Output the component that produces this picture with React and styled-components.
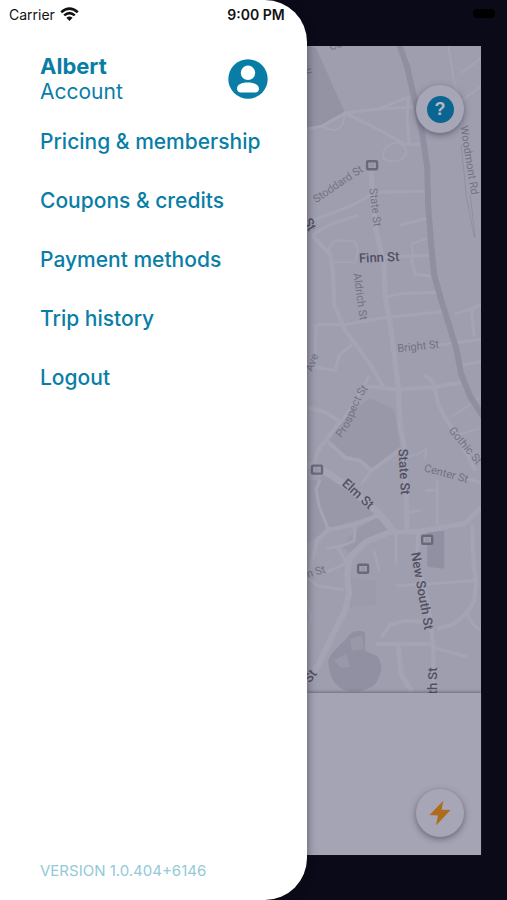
import styled, { createGlobalStyle } from "styled-components"

const GlobalStyle = createGlobalStyle`
          * {
                    box-sizing: border-box;
          }

          body {
                    margin: 0;
                    background: #0a0a18;
                    font-family: Inter, "Liberation Sans", sans-serif;
          }
`

const Container = styled.div`
          min-height: 100vh;
          display: flex;
`

const Drawer = styled.aside`
          position: relative;
          z-index: 1;
          flex: 0 0 60.5%;
          display: flex;
          flex-direction: column;
          background: white;
          border-radius: 0 42px 42px 0;
          box-shadow: 0 0 10px rgba(10, 10, 24, 0.5);
`

const StatusBar = styled.div`
          height: 28px;
          padding: 0 22px 0 9px;
          display: flex;
          align-items: center;
          justify-content: space-between;
          color: #111;
          font-size: 14px;
`

const Carrier = styled.span`
          display: flex;
          align-items: center;
          gap: 5px;
`

const Time = styled.span`
          font-weight: 600;
`

const Profile = styled.a`
          margin: 26px 39px 0 40px;
          display: flex;
          align-items: center;
          justify-content: space-between;
          color: #087ea6;
          font-size: 21px;
          line-height: 25px;
          text-decoration: none;
`

const ProfileText = styled.span`
          display: flex;
          flex-direction: column;
`

const Name = styled.strong`
          font-size: 22px;
          font-weight: 700;
`

const Menu = styled.nav`
          margin: 25px 20px 0 40px;
          display: flex;
          flex-direction: column;
          align-items: flex-start;
          gap: 33px;
`

const MenuLink = styled.a`
          color: #087ea6;
          font-size: 21px;
          font-weight: 500;
          line-height: 26px;
          text-decoration: none;
          white-space: nowrap;
`

const Version = styled.p`
          margin: auto 0 0;
          padding: 0 40px 20px;
          color: #93c9d8;
          font-size: 15px;
          line-height: 18px;
`

const Backdrop = styled.main`
          flex: 1;
          min-width: 0;
          padding: 0 26px 45px 0;
          display: flex;
          flex-direction: column;
`

const BackdropBar = styled.div`
          height: 46px;
          margin-right: -14px;
          padding-top: 9px;
          display: flex;
          justify-content: flex-end;
`

const Battery = styled.div`
          width: 22px;
          height: 9px;
          border-radius: 4px;
          background: black;
`

const MapArea = styled.section`
          position: relative;
          flex: 1;
          min-height: 320px;
          display: flex;
          contain: size;
          overflow: hidden;
          background: #9f9eaf;
`

const MapDrawing = styled.svg`
          flex: 1;
          min-width: 0;
          display: block;
`

const Road = styled.path`
          fill: none;
          stroke: #a5a4b4;
          stroke-width: ${props => props.$width || 3};
          stroke-linejoin: round;
`

const Label = styled.text`
          fill: ${props => props.$main ? "#515062" : "#737284"};
          font-family: Roboto, "Liberation Sans", sans-serif;
          font-size: ${props => props.$main ? "13px" : "11px"};
          font-weight: ${props => props.$main ? 500 : 400};
          text-anchor: middle;
          dominant-baseline: central;
`

const Sheet = styled.section`
          position: relative;
          height: 162px;
          padding: 0 17px 18px 0;
          display: flex;
          align-items: flex-end;
          justify-content: flex-end;
          background: #a5a4b5;
          box-shadow: 0 -1px 3px rgba(60, 58, 80, 0.5);
`

const RoundButton = styled.button`
          width: 48px;
          height: 48px;
          padding: 0;
          display: flex;
          align-items: center;
          justify-content: center;
          border: none;
          border-radius: 50%;
          background: #a7a6b7;
          box-shadow: 0 2px 6px rgba(50, 48, 70, 0.55);
          cursor: pointer;
`

const HelpButton = styled(RoundButton)`
          position: absolute;
          top: 39px;
          right: 17px;
`

const HelpMark = styled.span`
          width: 27px;
          height: 27px;
          border-radius: 50%;
          background: #0a6690;
          color: #b5b9ca;
          font-size: 18px;
          font-weight: 700;
          line-height: 27px;
`

const menuItems = [
          "Pricing & membership",
          "Coupons & credits",
          "Payment methods",
          "Trip history",
          "Logout",
]

const roads = [
          { d: "M307 129 L322 126 L345 113 L378 109 L414 107" },
          { d: "M345 113 L372 126 L405 144 L420 144" },
          { d: "M378 109 L396 102 L408 97 L407 120 L409 144" },
          { d: "M322 126 Q343 138 345 113", w: 2 },
          { d: "M383 158 Q382 144 398 142 Q412 150 402 159 Q391 164 383 158", w: 2 },
          { d: "M371 170 L375 225 L384 265 L385 295 L391 330 L398 385 L400 425 L404 445 L406 495 L407 530", w: 5 },
          { d: "M425 191 L376 192 L350 206 L310 221" },
          { d: "M312 235 L330 224 L358 215" },
          { d: "M312 235 L330 254 L333 272 L334 304 L345 330 L369 362 L384 388", w: 4 },
          { d: "M331 262 L329 249 Q331 239 342 240 L354 241 Q360 247 355 262 L331 262", w: 2 },
          { d: "M428 218 L399 225" },
          { d: "M427 238 L411 244 L413 255", w: 2 },
          { d: "M383 257 L429 255 M411 258 L415 274 L432 276" },
          { d: "M384 297 L403 293 L436 292" },
          { d: "M317 324 L345 324 L386 317 L443 311" },
          { d: "M454 314 L470 309 L481 304 M471 309 L474 336", w: 3 },
          { d: "M437 345 L456 342 L481 339 M460 365 L481 361" },
          { d: "M307 365 L335 370 L339 355 L352 344" },
          { d: "M316 324 L315 363" },
          { d: "M367 386 L399 389 L431 387 L461 382", w: 4 },
          { d: "M424 374 L433 381 L438 403 L446 419 L460 440 L475 470", w: 4 },
          { d: "M451 416 L470 404 L481 396", w: 2 },
          { d: "M307 407 L326 412 L340 421 L318 450 L314 462", w: 4 },
          { d: "M369 376 L353 404 L340 423" },
          { d: "M328 441 L345 457 L360 460 L371 470 L391 456 L402 448", w: 4 },
          { d: "M371 470 L361 484" },
          { d: "M307 463 L325 471 L342 482 L366 501 L379 513 L393 530", w: 7 },
          { d: "M320 479 L316 489 L319 505 L328 528" },
          { d: "M380 514 L354 524 L328 529 L317 540 L313 557 L309 573", w: 4 },
          { d: "M393 530 L366 541 L350 556 L347 573 L349 592 L345 610 L332 635 L319 663 L307 680", w: 6 },
          { d: "M355 526 L354 540 L342 545 L325 548 M337 545 L347 563", w: 3 },
          { d: "M307 577 L318 585 L344 589 M327 571 L350 561" },
          { d: "M307 640 L310 616 L307 600" },
          { d: "M392 531 L416 531 L464 523 L481 507", w: 5 },
          { d: "M396 531 L396 564 M374 550 L379 570" },
          { d: "M437 480 L437 524 M405 512 L420 510" },
          { d: "M466 478 L481 482 M425 490 L438 489" },
          { d: "M472 524 L473 560 L476 582 L474 600 L466 613 L452 624 L437 628", w: 4 },
          { d: "M396 585 L430 583 L475 580" },
          { d: "M418 532 L417 560 L428 603 L433 643 L433 693", w: 4 },
          { d: "M433 621 L404 620 L390 624 L381 636 M376 643 L433 643", w: 4 },
          { d: "M398 643 L401 673 L412 691", w: 5 },
          { d: "M435 647 L467 656 M466 613 L476 627 L481 629" },
          { d: "M448 46 L454 82 L461 106 M461 73 L481 58 M462 100 L481 86", w: 2 },
          { d: "M393 460 L419 453 L426 448 L425 459 M479 428 L455 435", w: 2 },
]

const labels = [
          { text: "Co", x: 336, y: 45, r: -18 },
          { text: "n", x: 308, y: 71, r: -100 },
          { text: "Stoddard St", x: 338, y: 184, r: -34 },
          { text: "State St", x: 375, y: 207, r: 84 },
          { text: "St", x: 310, y: 224, r: 62, main: true },
          { text: "Finn St", x: 379, y: 257, r: -3, main: true },
          { text: "Aldrich St", x: 360, y: 296, r: 82 },
          { text: "Bright St", x: 418, y: 346, r: -6 },
          { text: "Ave", x: 312, y: 362, r: -68 },
          { text: "Gothic St", x: 465, y: 445, r: 50 },
          { text: "State St", x: 404, y: 471, r: 87, main: true },
          { text: "Center St", x: 446, y: 473, r: 15 },
          { text: "Elm St", x: 358, y: 493, r: 42, main: true },
          { text: "n St", x: 316, y: 571, r: -16 },
          { text: "New South St", x: 422, y: 590, r: 80, main: true },
          { text: "St", x: 310, y: 675, r: -54, main: true },
          { text: "th St", x: 432, y: 680, r: -90, main: true },
          { text: "Woodmont Rd", x: 469, y: 160, r: 81 },
]

const shields = [
          [372, 165],
          [317, 469],
          [427, 539],
          [363, 568],
]

const WifiIcon = () => (
          <svg width="19" height="15" viewBox="0 0 19 15" fill="none" stroke="#111" strokeWidth="2.5" aria-hidden="true">
                    <path d="M1.2 5.2 Q9.5 -2 17.8 5.2" />
                    <path d="M4.2 8.4 Q9.5 3.8 14.8 8.4" />
                    <path d="M9.5 14 L6.4 10.8 Q9.5 8.3 12.6 10.8 Z" fill="#111" stroke="none" />
          </svg>
)

const AvatarIcon = () => (
          <svg width="40" height="40" viewBox="0 0 40 40" aria-hidden="true">
                    <circle cx="20" cy="20" r="19.7" fill="#087ea6" />
                    <circle cx="20" cy="13.8" r="7.2" fill="white" />
                    <path d="M9 29.5 C9 25.5 14 23.6 20 23.6 C26 23.6 31 25.5 31 29.5 C31 32.2 29.5 33.4 27 33.4 L13 33.4 C10.5 33.4 9 32.2 9 29.5 Z" fill="white" />
          </svg>
)

const BoltIcon = () => (
          <svg width="24" height="26" viewBox="0 0 24 26" aria-hidden="true">
                    <path d="M15.5 0.5 L1.5 15 L10 15.5 L8 25.5 L22.5 10 L13.5 9.8 Z" fill="#ad6d1c" />
          </svg>
)

const Shield = ({ x, y }) => (
          <g>
                    <rect x={x - 5} y={y - 4} width="10" height="8" rx="1" fill="#a09fb0" stroke="#6a697b" strokeWidth="2.4" />
                    <rect x={x - 2} y={y - 2} width="4" height="4" fill="#9796a7" />
          </g>
)

const TownMap = () => (
          <MapDrawing viewBox="307 46 174 647" preserveAspectRatio="xMaxYMin slice" role="img" aria-label="Map">
                    <g fill="#9998a9">
                              <path d="M307 46 L316 48 L345 113 L322 126 L307 129 Z" fill="#9493a4" />
                              <path d="M346 415 L370 398 L394 409 L400 445 L372 468 L358 459 L345 456 L329 440 Z" />
                              <path d="M307 480 L320 479 L325 472 L378 513 L328 528 L307 543 Z" />
                              <path d="M357 528 L377 517 L389 529 L350 553 L342 545 Z" />
                              <path d="M350 577 L376 580 L376 604 L350 607 Z" fill="#9c9bac" />
                              <path d="M427 532 L444 530 L444 568 L427 566 Z" fill="#9190a2" />
                              <path d="M328 660 C332 648 345 641 350 633 C356 629 362 629 365 632 L365 650 L377 655 C384 664 381 674 376 682 C367 692 345 694 337 684 C331 678 329 669 328 660 Z" fill="#9190a2" />
                              <path d="M334 659 L346 653 L350 666 L341 667 Z M350 638 L362 634 L364 648 L352 650 Z" />
                    </g>

                    {roads.map(road => (
                              <Road key={road.d} d={road.d} $width={road.w} />
                    ))}

                    <path
                              d="M399 44 L407 67 L414 97 L422 133 L427 167 L428 205 L431 245 L434 275 L442 303 L449 325 L456 348 L461 374 L470 396 L484 418"
                              fill="none"
                              stroke="#908fa1"
                              strokeWidth="6"
                    />
                    <path d="M461 145 L466 195 L474 237 M470 195 L475 238" fill="none" stroke="#9190a2" />

                    {shields.map(([x, y]) => (
                              <Shield key={x} x={x} y={y} />
                    ))}

                    {labels.map(label => (
                              <Label
                                        key={label.text + label.y}
                                        $main={label.main}
                                        transform={`translate(${label.x} ${label.y}) rotate(${label.r})`}
                              >
                                        {label.text}
                              </Label>
                    ))}

                    <path id="prospect" d="M336 437 C348 425 350 412 355 402 C359 394 362 388 367 384" fill="none" />
                    <Label>
                              <textPath href="#prospect" startOffset="50%">Prospect St</textPath>
                    </Label>
          </MapDrawing>
)

const App = () => {
          return (
                    <Container>
                              <GlobalStyle />

                              <Drawer>
                                        <StatusBar>
                                                  <Carrier>
                                                            Carrier
                                                            <WifiIcon />
                                                  </Carrier>

                                                  <Time>9:00 PM</Time>
                                        </StatusBar>

                                        <Profile href="#account">
                                                  <ProfileText>
                                                            <Name>Albert</Name>
                                                            <span>Account</span>
                                                  </ProfileText>

                                                  <AvatarIcon />
                                        </Profile>

                                        <Menu>
                                                  {menuItems.map(item => (
                                                            <MenuLink key={item} href="#menu">{item}</MenuLink>
                                                  ))}
                                        </Menu>

                                        <Version>VERSION 1.0.404+6146</Version>
                              </Drawer>

                              <Backdrop>
                                        <BackdropBar>
                                                  <Battery />
                                        </BackdropBar>

                                        <MapArea>
                                                  <TownMap />

                                                  <HelpButton aria-label="Help">
                                                            <HelpMark>?</HelpMark>
                                                  </HelpButton>
                                        </MapArea>

                                        <Sheet>
                                                  <RoundButton aria-label="Unlock">
                                                            <BoltIcon />
                                                  </RoundButton>
                                        </Sheet>
                              </Backdrop>
                    </Container>
          )
}

export default App
